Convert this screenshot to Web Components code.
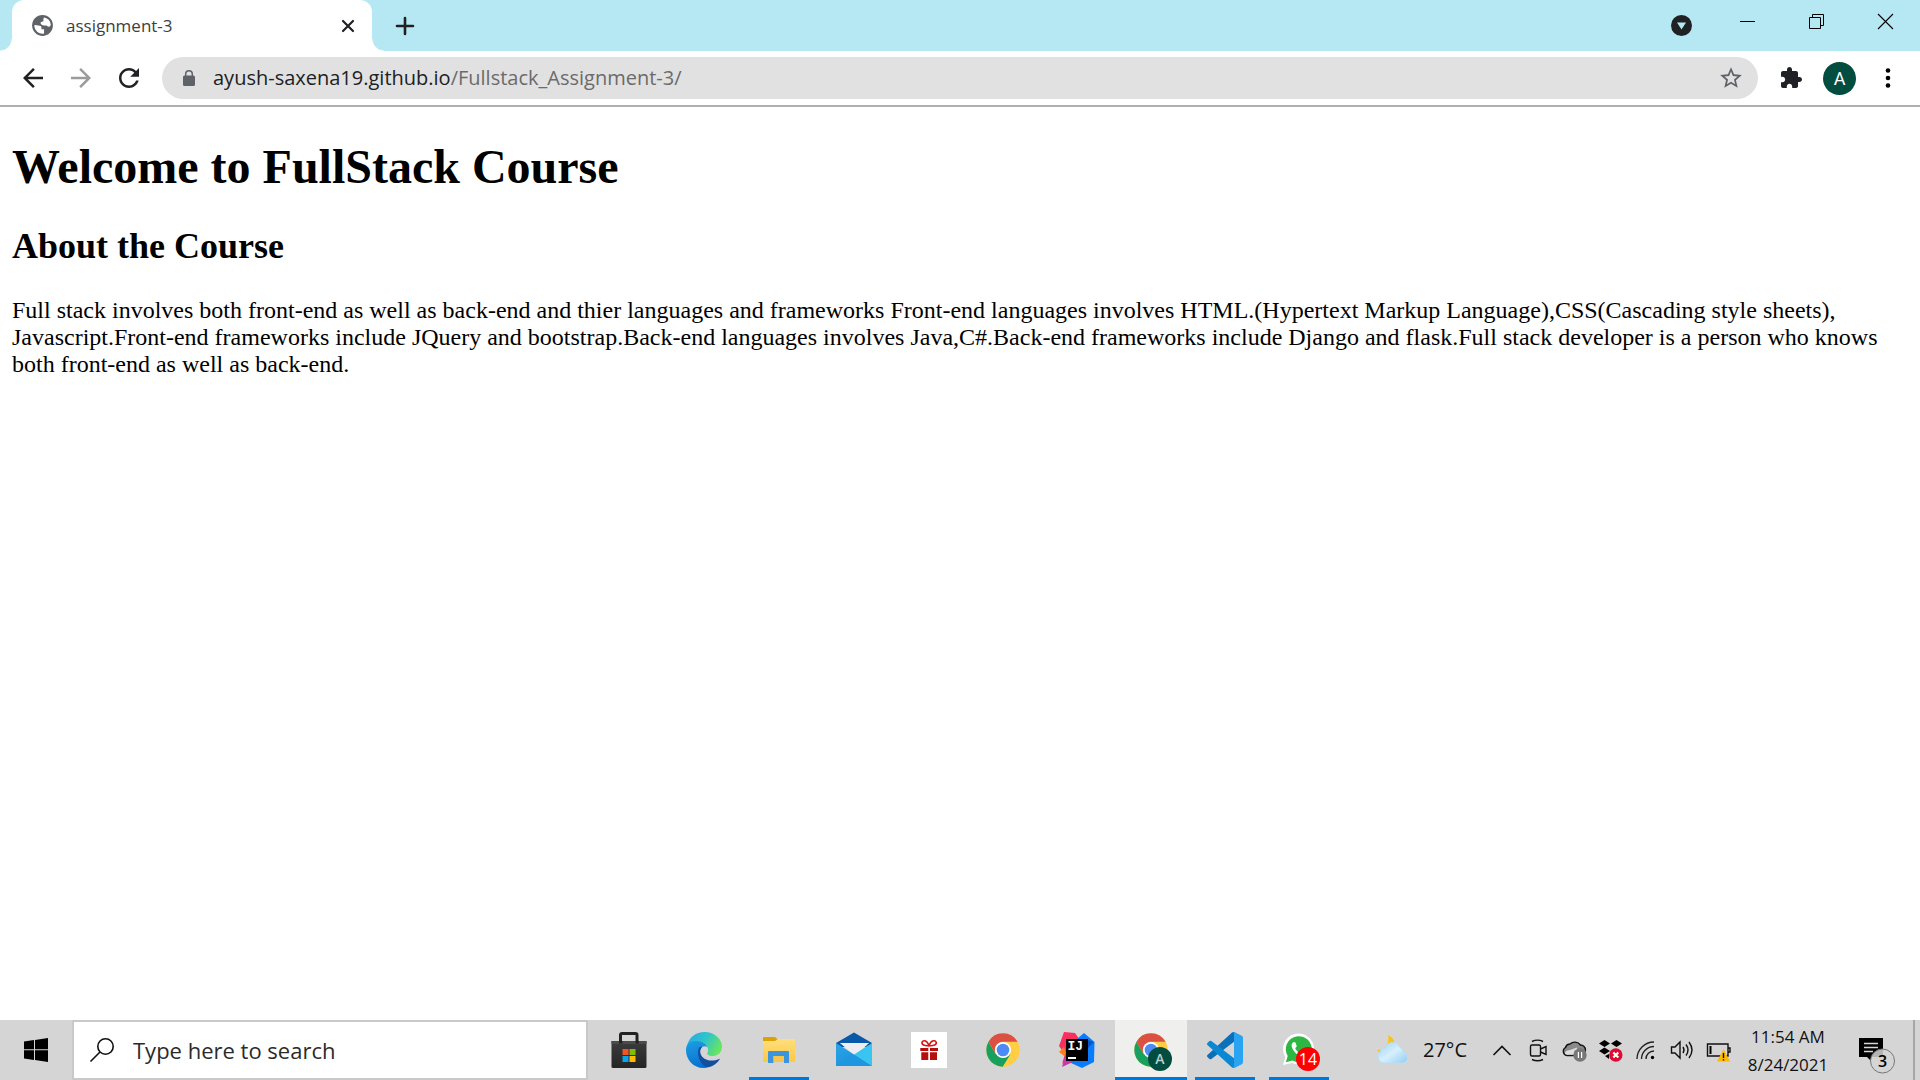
<!DOCTYPE html>
<html lang="en">
<head>
<meta charset="utf-8">
<title>assignment-3</title>
<style>
  html, body { margin: 0; height: 100%; }
  body { font-family: "Open Sans", "Noto Sans", sans-serif; background: #fff; }
</style>
</head>
<body>
<desktop-screen>
  <tab-strip slot="tabs">
    <browser-tab>assignment-3</browser-tab>
  </tab-strip>
  <nav-toolbar slot="toolbar" host="ayush-saxena19.github.io" path="/Fullstack_Assignment-3/"></nav-toolbar>
  <course-page>
    <span slot="title">Welcome to FullStack Course</span>
    <span slot="subtitle">About the Course</span>
    Full stack involves both front-end as well as back-end and thier languages and frameworks Front-end languages involves HTML.(Hypertext Markup Language),CSS(Cascading style sheets), Javascript.Front-end frameworks include JQuery and bootstrap.Back-end languages involves Java,C#.Back-end frameworks include Django and flask.Full stack developer is a person who knows both front-end as well as back-end.
  </course-page>
  <task-bar slot="taskbar">
    <task-app slot="pinned" icon="store" label="Microsoft Store"></task-app>
    <task-app slot="pinned" icon="edge" label="Edge"></task-app>
    <task-app slot="pinned" icon="files" label="File Explorer" running></task-app>
    <task-app slot="pinned" icon="mail" label="Mail"></task-app>
    <task-app slot="pinned" icon="gift" label="Offers"></task-app>
    <task-app slot="apps" icon="chrome" label="Chrome"></task-app>
    <task-app slot="apps" icon="idea" label="IntelliJ IDEA"></task-app>
    <task-app slot="apps" icon="chromeUser" label="Chrome profile" running active></task-app>
    <task-app slot="apps" icon="code" label="Visual Studio Code" running></task-app>
    <task-app slot="apps" icon="whatsapp" label="WhatsApp" running></task-app>
    <weather-chip slot="tray">27°C</weather-chip>
    <tray-icon slot="tray" icon="chevron" label="Show hidden icons"></tray-icon>
    <tray-icon slot="tray" icon="meet" label="Meet Now"></tray-icon>
    <tray-icon slot="tray" icon="cloud" label="OneDrive"></tray-icon>
    <tray-icon slot="tray" icon="dropbox" label="Dropbox"></tray-icon>
    <tray-icon slot="tray" icon="wifi" label="Network"></tray-icon>
    <tray-icon slot="tray" icon="sound" label="Volume"></tray-icon>
    <tray-icon slot="tray" icon="battery" label="Battery"></tray-icon>
    <tray-clock slot="tray" time="11:54 AM" date="8/24/2021"></tray-clock>
    <action-center slot="tray" count="3"></action-center>
  </task-bar>
</desktop-screen>

<script>
const svg = (size, box, body) =>
  `<svg width="${size}" height="${size}" viewBox="0 0 ${box} ${box}" aria-hidden="true">${body}</svg>`;

const RESET = `
  :host, * { box-sizing: border-box; }
  svg { display: block; flex: none; overflow: visible; }
  button { display: flex; align-items: center; justify-content: center; margin: 0; padding: 0; border: 0; background: none; color: inherit; font: inherit; }
`;

const CHROME = `
  <circle cx="18" cy="18" r="16.7" fill="#ffce44"/>
  <path d="M3.5 9.7A16.7 16.7 0 0 0 17.5 34.7L25.3 22.2 10.8 22.2z" fill="#18a05e"/>
  <path d="M3.5 9.7 10.8 22.2A8.4 8.4 0 0 1 18 9.8H32.6A16.7 16.7 0 0 0 3.5 9.7z" fill="#dc5044"/>
  <path d="M17.5 34.7 25.3 22.2A8 8 0 0 1 10.8 22.2z" fill="#18a05e"/>
  <circle cx="18" cy="18" r="8" fill="#fff"/><circle cx="18" cy="18" r="6.3" fill="#4c8bf5"/>`;

const APPS = {
  store: `<defs><linearGradient id="s" x2="0" y2="1"><stop stop-color="#3c3c3c"/><stop offset="1" stop-color="#252525"/></linearGradient></defs>
    <path d="M9.5 11V3Q9.500 1.500 11 1.500H24.500Q26 1.500 26 3V11" fill="none" stroke="#222" stroke-width="3"/>
    <path d="M.5 9H35.500V34.500Q35.500 36 34 36H2Q.5 36 .5 34.500z" fill="url(#s)"/><path d="M.5 9H35.500V12H.5z" fill="#4b4b4b"/>
    <path d="M8 9h3.500v2.500H8zM24.500 9H28v2.500h-3.500z" fill="#222"/>
    <path d="M11.500 17h6v6h-6z" fill="#f35325"/><path d="M18.500 17h6v6h-6z" fill="#81bc06"/><path d="M11.500 24h6v6h-6z" fill="#05a6f0"/><path d="M18.500 24h6v6h-6z" fill="#ffba08"/>`,
  edge: `<defs><linearGradient id="e1" x1="0" y1=".2" x2="1" y2=".6"><stop stop-color="#2aa9e8"/><stop offset=".5" stop-color="#2fc5c8"/><stop offset="1" stop-color="#6be65b"/></linearGradient>
    <linearGradient id="e2" x1=".2" y1="0" x2=".5" y2="1"><stop stop-color="#1b9de2"/><stop offset="1" stop-color="#0a6fd0"/></linearGradient></defs>
    <path d="M1 14C3 5 10 0 18.500 0C29 0 36 7.500 36 14.500C36 20.500 32 24 27 24C23 24 20.500 22.500 21.500 20.500C23 18 22 14 18 12.500C12 9 4 10 1 14z" fill="url(#e1)"/>
    <path d="M0 18C0 12 4 9 10 9C16 9 20 12 21 15C17 12.500 13.500 16 13.500 21C13.500 27 18 32 25 33.500C22.500 35.500 19.500 36 17.500 36C7.500 36 0 28 0 18z" fill="url(#e2)"/>
    <path d="M13 15.500C10 23 15 35 22.500 35.300C27 34.500 31 31.500 33.600 27.500C34 26.800 33.500 26.600 33 26.900C25 30.500 15.500 28 14.300 20.500C14 18.500 14.700 16.500 16 15.200C14.500 14.500 13.500 15 13 15.500z" fill="#134f9f"/>`,
  files: `<defs><linearGradient id="f" x2="0" y2="1"><stop stop-color="#ffdf7c"/><stop offset="1" stop-color="#fcc746"/></linearGradient></defs>
    <path d="M2 10V6Q2 5 3 5H14L17 7.500V10z" fill="#dea005"/><path d="M2 9H14L17 7H33Q34 7 34 8V29Q34 30 33 30H3Q2 30 2 29z" fill="url(#f)"/>
    <path d="M7 31V20Q7 19 8 19H27Q28 19 28 20V31H23V24H12.500V31z" fill="#3a95dc"/><path d="M12.500 24H23V30H12.500z" fill="#f6c34b"/>`,
  mail: `<defs><linearGradient id="m" x2="1" y2="1"><stop stop-color="#2aa4e8"/><stop offset="1" stop-color="#1a8ad8"/></linearGradient></defs>
    <path d="M0 11 18 .5 36 11V15H0z" fill="#0a59a8"/><path d="M4 11H33.500L18.500 23z" fill="#f2f2f4"/><path d="M33.500 11 36 13H31z" fill="#123f7c"/>
    <path d="M0 11 36 34H0z" fill="url(#m)"/><path d="M36 11V34L18 22.500z" fill="#39c5f2"/><path d="M0 34 18 22.500 36 34z" fill="#1f97e0"/><path d="M4.500 11H32L18 22.200z" fill="#eeeef2"/>`,
  gift: `<path d="M0 0H36V36H0z" fill="#fff"/><path d="M9.300 16H17.300V19H9.300zM19 16H27V19H19zM10.300 20.200H17.300V28H10.300zM19 20.200H26V28H19z" fill="#b50e0e"/>
    <path d="M18 13.500C15.500 7.500 11.500 8 11 10.500C10.800 13.500 15 14 18 13.500C21 14 25.500 13.500 25.300 10.500C24.500 8 20.500 7.500 18 13.500z" fill="none" stroke="#d81414" stroke-width="1.600"/>`,
  chrome: CHROME,
  idea: `<path d="M0 14 5 0 16 1 21 8 10 24 3 32 6 22z" fill="#f92f60"/><path d="M0 20 5 15 9 27z" fill="#fc801d"/><path d="M3 35 7 20 16 29z" fill="#c837ab"/>
    <path d="M18 7 25 1 35.500 10 35 30 23 36 12 31 20 8z" fill="#087cfa"/><path d="M28 8 35 10 28 17z" fill="#0a56c8"/><path d="M7 7H29V29H7z" fill="#000"/>
    <text x="8.500" y="18" font-family="Liberation Mono, monospace" font-weight="700" font-size="13" fill="#fff">IJ</text><path d="M9 25H17V27H9z" fill="#fff"/>`,
  chromeUser: CHROME + `<circle cx="27" cy="27" r="12" fill="#034d40"/>
    <text x="27" y="32" text-anchor="middle" font-family="Open Sans, sans-serif" font-weight="600" font-size="14" fill="#b8cfca">A</text>`,
  code: `<g transform="scale(.36)"><path d="M96.460 10.800 75.860.88a6.230 6.230 0 0 0-7.100 1.210L1.300 63.580a4.170 4.170 0 0 0 0 6.170l5.500 5a4.170 4.170 0 0 0 5.330.24L93.360 13.370c2.730-2.070 6.640-.13 6.640 3.300v-.24a6.250 6.250 0 0 0-3.540-5.630z" fill="#0a71b8"/>
    <path d="M96.460 89.200 75.860 99.120a6.230 6.230 0 0 1-7.100-1.210L1.300 36.420a4.170 4.170 0 0 1 0-6.170l5.500-5a4.170 4.170 0 0 1 5.330-.24l81.230 61.620c2.730 2.070 6.640.13 6.640-3.300v.24a6.250 6.250 0 0 1-3.540 5.630z" fill="#0b87d3"/>
    <path d="M75.860 99.130a6.230 6.230 0 0 1-7.100-1.210C71.060 100.220 75 98.590 75 95.330V4.670c0-3.260-3.940-4.890-6.250-2.580a6.230 6.230 0 0 1 7.100-1.210l20.600 9.900A6.250 6.250 0 0 1 100 16.400v67.200a6.250 6.250 0 0 1-3.540 5.630z" fill="#2aa4f2"/></g>`,
  whatsapp: `<path d="M2 33 4.300 25A15.500 15.500 0 1 1 11 31z" fill="#fff"/><path d="M4.800 30.300 6.700 24A13 13 0 1 1 11.500 28.600z" fill="#2cb742"/>
    <path d="M12.500 10C11 11 10 13 11 15.500C12.500 19.500 16.500 23.500 20.500 24.500C23 25 25 23.500 25 21.500L21.500 19.500 19.500 21.500C17 20.500 15 18 14.200 16.200L15.800 14.200 14.500 10.500z" fill="#fff"/>
    <circle cx="27" cy="27" r="12" fill="#f00"/><text x="27" y="33" text-anchor="middle" font-family="Open Sans, sans-serif" font-size="16" fill="#fff">14</text>`
};

const TRAY = {
  chevron: `<path d="M3.500 17 12 8.500 20.500 17" fill="none" stroke="#111" stroke-width="1.600"/>`,
  meet: `<g fill="none" stroke="#111" stroke-width="1.400"><rect x="4.500" y="7" width="10" height="11" rx="1.500"/><path d="M14.500 11 20 8.500V16.500L14.500 14M6 3.500Q11.500 .8 17 3.500M6 21.500Q11.500 24 17 21.500"/></g>`,
  cloud: `<path d="M5 17.500A4.300 4.300 0 0 1 3.500 9.500A5 5 0 0 1 8 6A7 7 0 0 1 18.500 7A5 5 0 0 1 23.500 12Q23 17.500 18 17.500z" fill="#8a8a8a" stroke="#111" stroke-width="1.400"/><path d="M3 16Q2.500 12.500 8 12L15 9.500V16.800H5z" fill="#ddd"/>
    <circle cx="18" cy="17" r="6.700" fill="#777"/><path d="M16.400 14V20M19.600 14V20" stroke="#fff" stroke-width="1.200"/>`,
  dropbox: `<path d="M1 5.500 6.500 2 12 5.500 6.500 9zM13 5.500 18.500 2 24 5.500 18.500 9zM1 13 6.500 9.500 12 13 6.500 16.500zM7 18 11 16V21z"/>
    <circle cx="17.800" cy="17" r="6.700" fill="#e00b2d"/><path d="M15.300 14.500 20.300 19.500M20.300 14.500 15.300 19.500" stroke="#fff" stroke-width="2.200"/>`,
  wifi: `<g fill="none" stroke="#222" stroke-width="1.400"><path d="M3 21A17 17 0 0 1 20 4M7.500 21A12.500 12.500 0 0 1 20 8.500M12 21A8 8 0 0 1 20 13"/></g><circle cx="18.500" cy="19.500" r="1.700"/>`,
  sound: `<g fill="none" stroke="#111" stroke-width="1.400"><path d="M1.500 9H5L10 4V20L5 15H1.500z"/><path d="M13 9Q15 12 13 15M16 6.500Q20 12 16 17.500M19 4Q25 12 19 20"/></g>`,
  battery: `<path d="M1.500 6H22V18H1.500zM22.500 10H24V14H22.500" fill="none" stroke="#111" stroke-width="1.400"/><path d="M3.500 8H5.500V16H3.500z"/>
    <path d="M17.500 11 24 23.500H11z" fill="#ffb900"/><path d="M17.500 15V20M17.500 21.200V22.500" stroke="#111" stroke-width="1.400"/>`
};

class Base extends HTMLElement {
  constructor() {
    super();
    this.attachShadow({ mode: 'open' });
  }
  connectedCallback() {
    this.shadowRoot.innerHTML = `<style>${RESET}${this.css()}</style>${this.html()}`;
  }
  attr(name) { return this.getAttribute(name) || ''; }
}

customElements.define('desktop-screen', class extends Base {
  css() { return `
    :host { display: flex; flex-direction: column; min-height: 100vh; background: #fff; }
    main { flex: 1; display: flex; flex-direction: column; }`; }
  html() { return `<slot name="tabs"></slot><slot name="toolbar"></slot><main><slot></slot></main><slot name="taskbar"></slot>`; }
});

customElements.define('tab-strip', class extends Base {
  css() { return `
    :host { display: flex; align-items: stretch; height: 51px; padding-left: 12px; background: #b5e8f2; color: #202124; }
    .new { width: 36px; margin-left: 15px; }
    .spacer { flex: 1; }
    .search { width: 64px; }
    .caption { display: flex; height: 43px; }
    .caption button { width: 69px; }`; }
  html() { return `
    <slot></slot>
    <button class="new" aria-label="New tab">${svg(18, 18, '<path d="M9 1V17M1 9H17" stroke="#202124" stroke-width="2.600" stroke-linecap="round"/>')}</button>
    <div class="spacer"></div>
    <button class="search" aria-label="Search tabs">${svg(21, 21, '<circle cx="10.500" cy="10.500" r="10.500" fill="#202124"/><path d="M6 7.500H15L10.500 14.500z" fill="#b5e8f2"/>')}</button>
    <div class="caption">
      <button aria-label="Minimize">${svg(15, 15, '<path d="M0 7H15V8H0z"/>')}</button>
      <button aria-label="Restore">${svg(15, 15, '<path d="M.5 3.500H11.500V14.500H.5zM3.500 3V.5H14.500V11.500H12" fill="none" stroke="#000"/>')}</button>
      <button aria-label="Close">${svg(15, 15, '<path d="M0 0 15 15M15 0 0 15" stroke="#000" stroke-width="1.100"/>')}</button>
    </div>`; }
});

customElements.define('browser-tab', class extends Base {
  css() { return `
    :host { position: relative; display: flex; align-items: center; flex: 0 1 360px; padding: 0 18px; gap: 11px; background: #fff; border-radius: 12px 12px 0 0; font-size: 17px; line-height: 24px; color: #3c4043; }
    :host::before, :host::after { content: ""; position: absolute; bottom: 0; width: 12px; height: 12px; }
    :host::before { right: 100%; background: radial-gradient(circle at 0 0, transparent 11px, #fff 12px); }
    :host::after { left: 100%; background: radial-gradient(circle at 100% 0, transparent 11px, #fff 12px); }
    .title { flex: 1; }`; }
  html() { return `
    ${svg(25, 24, '<path fill="#5f6368" d="M12 2C6.480 2 2 6.480 2 12s4.480 10 10 10 10-4.480 10-10S17.520 2 12 2z"/><path fill="#fff" d="M4 12.300C4.500 11 5.500 11.500 8 12C10 12 11 12.800 11 14V15.500H13.500V19.700A8 8 0 0 1 4 12.300zM13.500 4.200A8 8 0 0 1 20 11.500C19 13.500 17.500 13.500 16.500 12.500C15.500 11.300 13 12.500 11.500 11.500C9.500 10 10 8.500 12 8.200C14 8 12 6 13.500 4.200z"/>')}
    <span class="title"><slot></slot></span>
    <button aria-label="Close tab">${svg(12, 12, '<path d="M1 1 11 11M11 1 1 11" stroke="#202124" stroke-width="2.200" stroke-linecap="round"/>')}</button>`; }
});

customElements.define('nav-toolbar', class extends Base {
  css() { return `
    :host { display: flex; align-items: center; height: 56px; padding: 0 8px 0 9px; border-bottom: 2px solid #b0b0b0; background: #fff; color: #202124; }
    .nav { width: 48px; height: 42px; }
    .off { color: #9b9b9b; }
    .box { flex: 1; display: flex; align-items: center; height: 42px; margin: 0 9px; padding: 0 14px 0 21px; gap: 18px; border-radius: 21px; background: #e1e1e1; }
    .url { flex: 1; font-size: 20px; line-height: 28px; outline: none; white-space: nowrap; }
    .url span { color: #6b6b6b; }
    .ext { width: 48px; height: 42px; }
    .avatar { width: 33px; height: 33px; margin: 0 8px; border-radius: 50%; background: #034d40; color: #fff; font-family: Roboto, sans-serif; font-size: 18px; }`; }
  html() { return `
    <button class="nav" aria-label="Back">${svg(30, 24, '<path fill="currentColor" d="M20 11H7.830l5.590-5.590L12 4l-8 8 8 8 1.410-1.410L7.830 13H20v-2z"/>')}</button>
    <button class="nav off" aria-label="Forward">${svg(30, 24, '<path fill="currentColor" d="M12 4l-1.410 1.410L16.170 11H4v2h12.170l-5.580 5.590L12 20l8-8z"/>')}</button>
    <button class="nav" aria-label="Reload">${svg(30, 24, '<path fill="currentColor" d="M17.650 6.350C16.200 4.900 14.210 4 12 4c-4.420 0-7.990 3.580-7.990 8s3.570 8 7.990 8c3.730 0 6.840-2.550 7.730-6h-2.080c-.82 2.330-3.040 4-5.650 4-3.310 0-6-2.690-6-6s2.690-6 6-6c1.660 0 3.140.69 4.220 1.780L13 11h7V4l-2.350 2.350z"/>')}</button>
    <div class="box">
      <svg width="12" height="16" viewBox="0 0 12 16" aria-hidden="true"><rect y="5.500" width="12" height="10.500" rx="1.500" fill="#5f6368"/><path d="M2.700 6V4A3.300 3.300 0 0 1 9.300 4V6" fill="none" stroke="#5f6368" stroke-width="1.500"/></svg>
      <div class="url" role="textbox" aria-label="Address" contenteditable="true" spellcheck="false">${this.attr('host')}<span>${this.attr('path')}</span></div>
      <button aria-label="Bookmark this page">${svg(26, 24, '<path fill="#5f6368" d="M22 9.240l-7.190-.62L12 2 9.190 8.630 2 9.240l5.460 4.730L5.820 21 12 17.270 18.180 21l-1.630-7.030L22 9.240zM12 15.400l-3.760 2.270 1-4.280-3.320-2.880 4.380-.38L12 6.100l1.710 4.040 4.380.38-3.320 2.880 1 4.280L12 15.400z"/>')}</button>
    </div>
    <button class="ext" aria-label="Extensions">${svg(24, 24, '<path fill="currentColor" d="M20.500 11H19V7c0-1.100-.9-2-2-2h-4V3.500C13 2.120 11.880 1 10.500 1S8 2.120 8 3.500V5H4c-1.100 0-1.990.9-1.990 2v3.800H3.500c1.490 0 2.700 1.210 2.700 2.700s-1.210 2.700-2.700 2.700H2V20c0 1.100.9 2 2 2h3.800v-1.500c0-1.490 1.210-2.700 2.700-2.700 1.490 0 2.700 1.210 2.700 2.700V22H17c1.100 0 2-.9 2-2v-4h1.500c1.380 0 2.500-1.120 2.500-2.500S21.880 11 20.500 11z"/>')}</button>
    <button class="avatar" aria-label="Profile">A</button>
    <button class="ext" aria-label="Menu">${svg(20, 20, '<circle cx="10" cy="2.500" r="2.300"/><circle cx="10" cy="10" r="2.300"/><circle cx="10" cy="17.500" r="2.300"/>')}</button>`; }
});

customElements.define('course-page', class extends Base {
  css() { return `
    :host { display: block; padding: 0 12px; color: #000; font-family: "Liberation Serif", "Times New Roman", serif; }
    h1 { margin: 32px 0; font-size: 48px; line-height: 55px; }
    h2 { margin: 30px 0; font-size: 36px; line-height: 41px; }
    p { margin: 24px 0; font-size: 24px; line-height: 27px; }`; }
  html() { return `<h1><slot name="title"></slot></h1><h2><slot name="subtitle"></slot></h2><p><slot></slot></p>`; }
});

customElements.define('task-bar', class extends Base {
  css() { return `
    :host { display: flex; align-items: stretch; height: 60px; background: #d5d5d5; color: #111; }
    .start { width: 72px; }
    .find { display: flex; align-items: center; flex: 0 1 516px; padding-left: 16px; gap: 19px; border: 2px solid #c9c9c9; background: #fff; }
    input { flex: 1; min-width: 0; padding: 0; border: 0; outline: 0; background: none; font-family: inherit; font-size: 22px; line-height: 30px; color: #2b2b2b; }
    input::placeholder { color: #2b2b2b; opacity: 1; }
    .group { display: flex; }
    .pinned { gap: 3px; margin-left: 5px; }
    .apps { gap: 2px; margin-left: 2px; }
    .tray { display: flex; margin-left: auto; }
    .peek { width: 7px; border-left: 2px solid #a6a6a6; }`; }
  html() { return `
    <button class="start" aria-label="Start">${svg(24, 24, '<path d="M0 3.500 10 2V11.300H0zM11 1.900 24 0V11.300H11zM0 12.300H10V22L0 20.500zM11 12.300H24V24L11 22.100z"/>')}</button>
    <label class="find">${svg(24, 24, '<circle cx="15.500" cy="8.500" r="7.700" fill="none" stroke="#111" stroke-width="1.600"/><path d="M10 14 .5 23.500" stroke="#111" stroke-width="1.600"/>')}<input type="text" placeholder="Type here to search" aria-label="Search"></label>
    <div class="group pinned"><slot name="pinned"></slot></div>
    <div class="group apps"><slot name="apps"></slot></div>
    <div class="tray"><slot name="tray"></slot><button class="peek" aria-label="Show desktop"></button></div>`; }
});

customElements.define('task-app', class extends Base {
  css() { return `
    :host { display: flex; width: 72px; padding: 0 6px; }
    button { flex: 1; border-top: 3px solid transparent; border-bottom: 3px solid transparent; }
    :host([running]) button { border-bottom-color: #0078d7; }
    :host([active]) { padding: 0; background: #efefee; }`; }
  html() { return `<button aria-label="${this.attr('label')}">${svg(36, 36, APPS[this.attr('icon')])}</button>`; }
});

customElements.define('tray-icon', class extends Base {
  css() { return `:host { display: flex; width: 36px; } button { flex: 1; }`; }
  html() { return `<button aria-label="${this.attr('label')}">${svg(24, 24, TRAY[this.attr('icon')])}</button>`; }
});

customElements.define('weather-chip', class extends Base {
  css() { return `
    :host { display: flex; margin-right: 17px; font-size: 20px; line-height: 28px; }
    button { gap: 13px; }`; }
  html() { return `<button>
    <svg width="34" height="30" viewBox="0 0 34 30" aria-hidden="true">
      <defs><linearGradient id="w" x2="1" y2="1"><stop stop-color="#9ad4f7"/><stop offset=".5" stop-color="#d8effc"/><stop offset="1" stop-color="#8fcdf2"/></linearGradient></defs>
      <path d="M12 0C18 3 20 8 17 13C13 19 5 20 1 15C9 15 14 9 12 0z" fill="#fdc20f"/>
      <path d="M8 28A6 6 0 0 1 4 17.500A5 5 0 0 1 9 13A8 8 0 0 1 24 12.500Q27 13.500 27.500 17A5.700 5.700 0 0 1 27 28z" fill="url(#w)" stroke="#b8dff5"/>
    </svg><slot></slot></button>`; }
});

customElements.define('tray-clock', class extends Base {
  css() { return `
    :host { display: flex; width: 104px; padding-top: 2px; font-size: 17px; line-height: 28px; }
    button { flex: 1; flex-direction: column; white-space: nowrap; }`; }
  html() { return `<button><span>${this.attr('time')}</span><span>${this.attr('date')}</span></button>`; }
});

customElements.define('action-center', class extends Base {
  css() { return `:host { display: flex; width: 73px; } button { flex: 1; }`; }
  html() { return `<button aria-label="Notifications">
    <svg width="36" height="36" viewBox="0 0 36 36" aria-hidden="true">
      <path d="M0 6H24V25H12V29L8 25H0z"/><path d="M5 11.500H19M5 15.500H19M5 19.500H14" stroke="#d5d5d5" stroke-width="1.300"/>
      <circle cx="23.500" cy="29" r="12" fill="#d5d5d5" fill-opacity=".85" stroke="#777"/>
      <text x="23.500" y="35" text-anchor="middle" font-family="Open Sans, sans-serif" font-weight="600" font-size="16">${this.attr('count')}</text>
    </svg></button>`; }
});
</script>
</body>
</html>
